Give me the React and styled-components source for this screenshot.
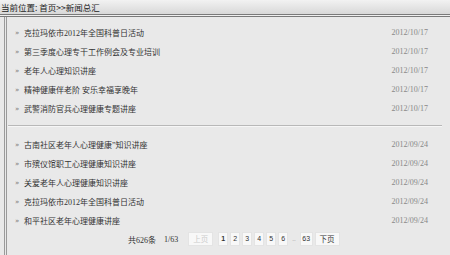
import styled, { createGlobalStyle } from "styled-components";

const GlobalStyle = createGlobalStyle`
  html, body {
    margin: 0;
    padding: 0;
    background: #e9e9e9;
  }
  body {
    font-family: "Noto Sans CJK SC", "DejaVu Sans", sans-serif;
    font-size: 10px;
    color: #333;
    width: 450px;
    height: 255px;
    overflow: hidden;
  }
`;

const Page = styled.div`
  width: 450px;
  height: 255px;
  display: flex;
  flex-direction: column;
  background: #e9e9e9;
`;

const Crumb = styled.div`
  height: 14px;
  line-height: 14px;
  padding-left: 1px;
  font-size: 8.5px;
  color: #222;
  background: linear-gradient(#f2f2f2, #d8d8d8);
  border-bottom: 3px double #7a7a7a;
`;

const Panel = styled.div`
  flex: 1;
  margin-left: 4px;
  border-left: 3px double #9a9a9a;
  padding: 6px 10px 0 8px;
`;

const List = styled.ul`
  list-style: none;
  margin: 0;
  padding: 0;
`;

const Item = styled.li`
  display: flex;
  align-items: center;
  height: 19px;
  padding-right: 12px;
`;

const Arrow = styled.span`
  font-family: "DejaVu Sans", sans-serif;
  font-size: 7px;
  color: #777;
  width: 9px;
`;

const Title = styled.span`
  flex: 1;
  font-family: "Liberation Serif", "Noto Sans CJK SC", serif;
  font-size: 8px;
  color: #333;
  white-space: nowrap;
`;

const Date = styled.span`
  font-family: "Liberation Serif", serif;
  font-size: 8px;
  color: #888;
`;

const Divider = styled.hr`
  margin: 7px -2px 8px -7px;
  border: 0;
  border-top: 1px solid #b8b8b8;
  border-bottom: 1px solid #f6f6f6;
`;

const Pager = styled.div`
  display: flex;
  align-items: center;
  gap: 2px;
  margin: 2px 0 0 113px;
  font-family: "Liberation Serif", "Noto Sans CJK SC", serif;
  font-size: 8px;
  color: #333;
`;

const Info = styled.span`
  margin-right: ${(p) => p.$gap || 0}px;
`;

const PageBtn = styled.span`
  min-width: 5px;
  height: 12px;
  line-height: 12px;
  margin-right: ${(p) => (p.$wide ? 3 : 0)}px;
  padding: 0 ${(p) => (p.$wide ? 4 : 1.5)}px;
  text-align: center;
  font-family: "Liberation Sans", sans-serif;
  font-size: 7px;
  font-weight: ${(p) => (p.$active ? 700 : 400)};
  background: #f8f8f8;
  color: ${(p) => (p.$disabled ? "#ccc" : "#333")};
  border: 1px solid #e4e4e4;
`;

const Cjk = styled.span`
  font-family: "Noto Sans CJK SC", sans-serif;
  font-size: 7.5px;
`;

const Ellipsis = styled.span`
  color: #aaa;
  font-size: 7px;
  padding: 0 2px;
`;

const first = [
  "克拉玛依市2012年全国科普日活动",
  "第三季度心理专干工作例会及专业培训",
  "老年人心理知识讲座",
  "精神健康伴老阶 安乐幸福享晚年",
  "武警消防官兵心理健康专题讲座",
];

const second = [
  "古南社区老年人心理健康\u201d知识讲座",
  "市殡仪馆职工心理健康知识讲座",
  "关爱老年人心理健康知识讲座",
  "克拉玛依市2012年全国科普日活动",
  "和平社区老年心理健康讲座",
];

function Rows({ items, date }) {
  return (
    <List>
      {items.map((t, i) => (
        <Item key={i}>
          <Arrow>»</Arrow>
          <Title>{t}</Title>
          <Date>{date}</Date>
        </Item>
      ))}
    </List>
  );
}

export default function App() {
  return (
    <>
      <GlobalStyle />
      <Page>
        <Crumb>当前位置: 首页&gt;&gt;新闻总汇</Crumb>
        <Panel>
          <Rows items={first} date="2012/10/17" />
          <Divider />
          <Rows items={second} date="2012/09/24" />
          <Pager>
            <Info $gap={6}>共626条</Info>
            <Info $gap={8}>1/63</Info>
            <PageBtn $wide $disabled>
              <Cjk>上页</Cjk>
            </PageBtn>
            <PageBtn $active>1</PageBtn>
            <PageBtn>2</PageBtn>
            <PageBtn>3</PageBtn>
            <PageBtn>4</PageBtn>
            <PageBtn>5</PageBtn>
            <PageBtn>6</PageBtn>
            <Ellipsis>..</Ellipsis>
            <PageBtn>63</PageBtn>
            <PageBtn $wide>
              <Cjk>下页</Cjk>
            </PageBtn>
          </Pager>
        </Panel>
      </Page>
    </>
  );
}
